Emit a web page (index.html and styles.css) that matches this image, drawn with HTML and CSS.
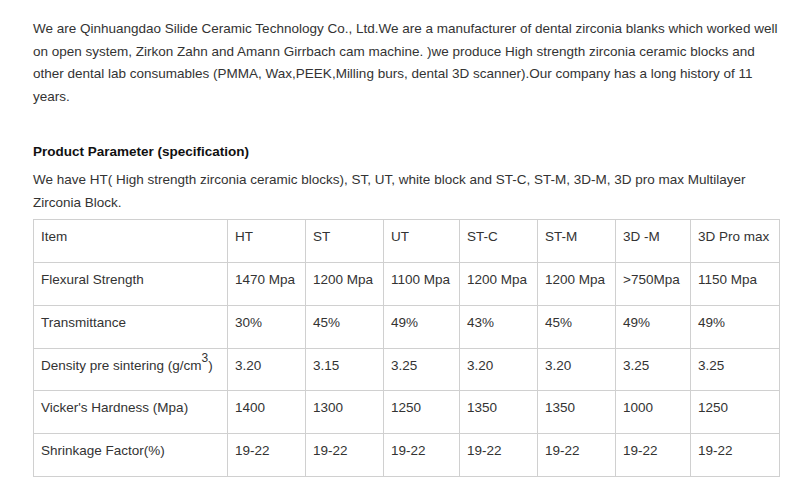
FILE: index.html
```html
<!DOCTYPE html>
<html>
<head>
<meta charset="utf-8">
<link rel="stylesheet" href="styles.css">
</head>
<body>
<div class="page">
  <p class="intro">We are Qinhuangdao Silide Ceramic Technology Co., Ltd.We are a manufacturer of dental zirconia blanks which worked well on open system, Zirkon Zahn and Amann Girrbach cam machine. )we produce High strength zirconia ceramic blocks and other dental lab consumables (PMMA, Wax,PEEK,Milling burs, dental 3D scanner).Our company has a long history of 11 years.</p>
  <h3 class="heading">Product Parameter (specification)</h3>
  <p class="lead">We have HT( High strength zirconia ceramic blocks), ST, UT, white block and ST-C, ST-M, 3D-M, 3D pro max Multilayer Zirconia Block.</p>
  <table class="spec">
    <colgroup>
      <col class="c-item">
      <col class="c-ht">
      <col class="c-st">
      <col class="c-ut">
      <col class="c-stc">
      <col class="c-stm">
      <col class="c-3dm">
      <col class="c-pro">
    </colgroup>
    <tr><td>Item</td><td>HT</td><td>ST</td><td>UT</td><td>ST-C</td><td>ST-M</td><td>3D -M</td><td>3D Pro max</td></tr>
    <tr><td>Flexural Strength</td><td>1470 Mpa</td><td>1200 Mpa</td><td>1100 Mpa</td><td>1200 Mpa</td><td>1200 Mpa</td><td>&gt;750Mpa</td><td>1150 Mpa</td></tr>
    <tr><td>Transmittance</td><td>30%</td><td>45%</td><td>49%</td><td>43%</td><td>45%</td><td>49%</td><td>49%</td></tr>
    <tr class="row-tight"><td>Density pre sintering (g/cm<sup>3</sup>)</td><td>3.20</td><td>3.15</td><td>3.25</td><td>3.20</td><td>3.20</td><td>3.25</td><td>3.25</td></tr>
    <tr><td>Vicker's Hardness (Mpa)</td><td>1400</td><td>1300</td><td>1250</td><td>1350</td><td>1350</td><td>1000</td><td>1250</td></tr>
    <tr><td>Shrinkage Factor(%)</td><td>19-22</td><td>19-22</td><td>19-22</td><td>19-22</td><td>19-22</td><td>19-22</td><td>19-22</td></tr>
  </table>
</div>
</body>
</html>
```
FILE: styles.css
```css
html, body {
  margin: 0;
  padding: 0;
  background: #fff;
}
body {
  font-family: "Liberation Sans", Arial, sans-serif;
  font-size: 13.5px;
  line-height: 22.7px;
  color: #333;
}
.page {
  padding: 18px 32px 0 33px;
}
.intro {
  margin: 0;
}
.heading {
  margin: 31px 0 6px;
  font-size: 13.5px;
  font-weight: bold;
  line-height: 23px;
  color: #111;
}
.lead {
  margin: 0 0 5px;
}
.spec {
  width: 746px;
  border-collapse: collapse;
  table-layout: fixed;
  line-height: 23px;
}
.c-item { width: 194px; }
.c-ht { width: 78px; }
.c-st { width: 78px; }
.c-ut { width: 76px; }
.c-stc { width: 78px; }
.c-stm { width: 78px; }
.c-3dm { width: 75px; }
.c-pro { width: 89px; }
.spec td {
  border: 1px solid #d0d0d0;
  padding: 5px 7px 14px;
  height: 23px;
  vertical-align: top;
  white-space: nowrap;
}
.row-tight td {
  padding-bottom: 13px;
}
.spec sup {
  font-size: 12px;
  line-height: 0;
  vertical-align: 8px;
}
```
